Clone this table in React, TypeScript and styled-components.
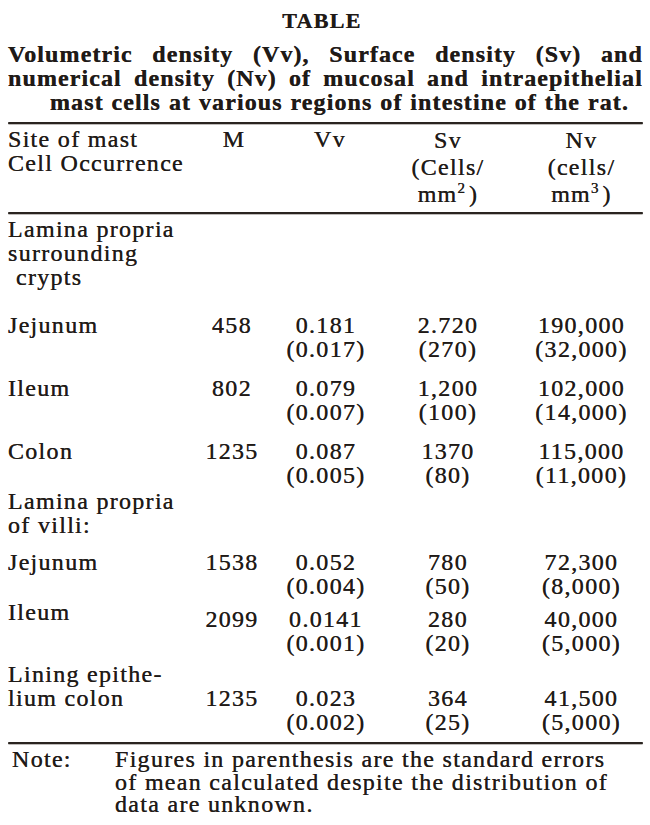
import React from "react";
import styled, { createGlobalStyle } from "styled-components";

const GlobalStyle = createGlobalStyle`
  html, body {
    margin: 0;
    padding: 0;
    background: #ffffff;
  }
  body {
    font-family: "Liberation Serif", "Times New Roman", serif;
    color: #1f1a17;
  }
`;

const Page = styled.div`
  width: 635px;
  padding: 9px 7px 0 8px;
  text-shadow: 0 0 0.6px rgba(20, 15, 10, 0.7);
  -webkit-text-stroke: 0.2px #1f1a17;
`;

const Title = styled.div`
  text-align: center;
  font-weight: bold;
  font-size: 22px;
  line-height: 24px;
  letter-spacing: 1.3px;
  padding-right: 7px;
`;

const Caption = styled.div`
  margin-top: 9px;
  font-weight: bold;
  font-size: 24px;
  line-height: 24px;
  letter-spacing: 1.1px;
`;

const CaptionLine = styled.div<{ $indent?: number; $endGap?: number }>`
  text-align: justify;
  text-align-last: justify;
  margin-left: ${(p) => p.$indent ?? 0}px;
  margin-right: ${(p) => p.$endGap ?? 0}px;
`;

const Rule = styled.div<{ $top: number }>`
  height: 2px;
  margin-top: ${(p) => p.$top}px;
  background: #2a2420;
  border-radius: 1px;
  box-shadow: 0 0.5px 0.6px rgba(40, 30, 25, 0.6);
`;

const Table = styled.div`
  font-size: 24px;
  letter-spacing: 1.3px;
`;

const Row = styled.div<{ $gap?: number }>`
  display: grid;
  grid-template-columns: 180px 88px 100px 144px 1fr;
  margin-top: ${(p) => p.$gap ?? 0}px;
`;

const Label = styled.div`
  line-height: 24px;
  white-space: nowrap;
`;

const Line = styled.div<{ $indent?: number }>`
  padding-left: ${(p) => p.$indent ?? 0}px;
`;

const Value = styled.div<{ $drop?: number; $lh?: number; $shift?: number }>`
  text-align: center;
  white-space: nowrap;
  line-height: ${(p) => p.$lh ?? 24}px;
  padding-top: ${(p) => p.$drop ?? 0}px;
  padding-left: ${(p) => Math.max(0, p.$shift ?? 0)}px;
  padding-right: ${(p) => Math.max(0, -(p.$shift ?? 0))}px;
`;

const Sup = styled.span`
  font-size: 15px;
  line-height: 0;
  vertical-align: 9px;
  letter-spacing: 0;
  margin-right: 4px;
`;

const Note = styled.div`
  display: grid;
  grid-template-columns: 107px 1fr;
  margin-top: 4px;
  font-size: 24px;
  line-height: 22.5px;
  letter-spacing: 1.3px;
`;

const NoteLabel = styled.div`
  padding-left: 4px;
`;

type DataRow = {
  label: string[];
  m: string;
  vv: [string, string];
  sv: [string, string];
  nv: [string, string];
  gap: number;
  drop?: number;
};

const section1: DataRow[] = [
  { label: ["Jejunum"], m: "458", vv: ["0.181", "(0.017)"], sv: ["2.720", "(270)"], nv: ["190,000", "(32,000)"], gap: 24 },
  { label: ["Ileum"], m: "802", vv: ["0.079", "(0.007)"], sv: ["1,200", "(100)"], nv: ["102,000", "(14,000)"], gap: 15 },
  { label: ["Colon"], m: "1235", vv: ["0.087", "(0.005)"], sv: ["1370", "(80)"], nv: ["115,000", "(11,000)"], gap: 15 },
];

const section2: DataRow[] = [
  { label: ["Jejunum"], m: "1538", vv: ["0.052", "(0.004)"], sv: ["780", "(50)"], nv: ["72,300", "(8,000)"], gap: 13 },
  { label: ["Ileum"], m: "2099", vv: ["0.0141", "(0.001)"], sv: ["280", "(20)"], nv: ["40,000", "(5,000)"], gap: 2, drop: 7 },
  { label: ["Lining epithe-", "lium colon"], m: "1235", vv: ["0.023", "(0.002)"], sv: ["364", "(25)"], nv: ["41,500", "(5,000)"], gap: 7, drop: 24 },
];

function Data({ row }: { row: DataRow }) {
  return (
    <Row $gap={row.gap}>
      <Label>
        {row.label.map((l) => (
          <Line key={l}>{l}</Line>
        ))}
      </Label>
      <Value $drop={row.drop}>{row.m}</Value>
      <Value $drop={row.drop}>
        <div>{row.vv[0]}</div>
        <div>{row.vv[1]}</div>
      </Value>
      <Value $drop={row.drop}>
        <div>{row.sv[0]}</div>
        <div>{row.sv[1]}</div>
      </Value>
      <Value $drop={row.drop}>
        <div>{row.nv[0]}</div>
        <div>{row.nv[1]}</div>
      </Value>
    </Row>
  );
}

export default function App() {
  return (
    <>
      <GlobalStyle />
      <Page>
        <Title>TABLE</Title>
        <Caption>
          <CaptionLine>Volumetric density (Vv), Surface density (Sv) and</CaptionLine>
          <CaptionLine>numerical density (Nv) of mucosal and intraepithelial</CaptionLine>
          <CaptionLine $indent={42} $endGap={14}>
            mast cells at various regions of intestine of the rat.
          </CaptionLine>
        </Caption>
        <Rule $top={8} />
        <Table>
          <Row $gap={3}>
            <Label>
              <Line>Site of mast</Line>
              <Line>Cell Occurrence</Line>
            </Label>
            <Value $shift={4}>M</Value>
            <Value $shift={8}>Vv</Value>
            <Value $lh={27}>
              <div>Sv</div>
              <div>(Cells/</div>
              <div>
                mm<Sup>2</Sup>)
              </div>
            </Value>
            <Value $lh={27}>
              <div>Nv</div>
              <div>(cells/</div>
              <div>
                mm<Sup>3</Sup>)
              </div>
            </Value>
          </Row>
          <Rule $top={4} />
          <Row $gap={3}>
            <Label>
              <Line>Lamina propria</Line>
              <Line>surrounding</Line>
              <Line $indent={8}>crypts</Line>
            </Label>
          </Row>
          {section1.map((r, i) => (
            <Data key={"a" + i} row={r} />
          ))}
          <Row $gap={2}>
            <Label>
              <Line>Lamina propria</Line>
              <Line>of villi:</Line>
            </Label>
          </Row>
          {section2.map((r, i) => (
            <Data key={"b" + i} row={r} />
          ))}
        </Table>
        <Rule $top={8} />
        <Note>
          <NoteLabel>Note:</NoteLabel>
          <div>
            <div>Figures in parenthesis are the standard errors</div>
            <div>of mean calculated despite the distribution of</div>
            <div>data are unknown.</div>
          </div>
        </Note>
      </Page>
    </>
  );
}
